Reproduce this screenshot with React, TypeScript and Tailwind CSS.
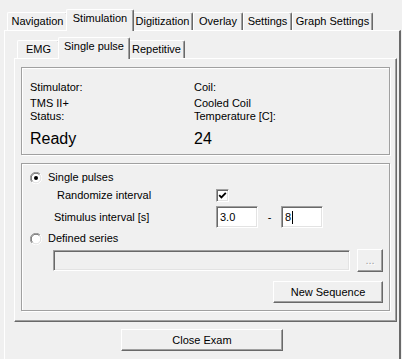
import React from "react";

const raised =
  "border border-t-white border-l-white border-r-[#696969] border-b-[#696969] shadow-[inset_-1px_-1px_0_#a0a0a0]";
const sunken =
  "border border-t-[#a0a0a0] border-l-[#a0a0a0] border-r-white border-b-white shadow-[inset_1px_1px_0_#696969,inset_-1px_-1px_0_#e3e3e3]";
const etched = "border border-[#a0a0a0] shadow-[inset_1px_1px_0_#ffffff,1px_1px_0_#ffffff]";

function Tab({ label, width, active }: { label: string; width: string; active?: boolean }) {
  if (active) {
    return (
      <div
        className={`relative z-10 -mx-[2px] -mb-[1px] h-[22px] ${width} shrink-0 rounded-t-[2px] border-l border-t border-r border-l-white border-t-white border-r-[#696969] bg-[#f0f0f0] pt-[2px] text-center leading-[13px] shadow-[inset_-1px_0_0_#a0a0a0]`}
      >
        {label}
      </div>
    );
  }
  return (
    <div
      className={`h-[18px] ${width} shrink-0 rounded-t-[2px] border-l border-t border-r border-l-white border-t-white border-r-[#696969] pt-[2px] text-center leading-[13px] shadow-[inset_-1px_0_0_#a0a0a0]`}
    >
      {label}
    </div>
  );
}

function Radio({ checked }: { checked?: boolean }) {
  return (
    <svg width="12" height="12" viewBox="0 0 12 12" className="shrink-0">
      <circle cx="6" cy="6" r="4.5" fill="#ffffff" />
      <path d="M1.9 10.1 A5.5 5.5 0 0 1 10.1 1.9" fill="none" stroke="#a0a0a0" strokeWidth="1" />
      <path d="M10.1 1.9 A5.5 5.5 0 0 1 1.9 10.1" fill="none" stroke="#ffffff" strokeWidth="1" />
      <path d="M2.6 9.4 A4.5 4.5 0 0 1 9.4 2.6" fill="none" stroke="#696969" strokeWidth="1" />
      <path d="M9.4 2.6 A4.5 4.5 0 0 1 2.6 9.4" fill="none" stroke="#e3e3e3" strokeWidth="1" />
      {checked && <circle cx="6" cy="6" r="2" fill="#000000" />}
    </svg>
  );
}

function Checkbox() {
  return (
    <span className={`flex h-[13px] w-[13px] shrink-0 items-center justify-center bg-white ${sunken}`}>
      <svg width="9" height="9" viewBox="0 0 9 9">
        <polyline points="1.2,4.2 3.4,6.4 7.8,1.8" fill="none" stroke="#000000" strokeWidth="1.8" />
      </svg>
    </span>
  );
}

export default function App() {
  return (
    <div className="h-[359px] w-[402px] overflow-hidden bg-[#f0f0f0] pt-[9px] font-['Liberation_Sans',Arial,sans-serif] text-[11px] text-black">
      {/* main tabs */}
      <div className="flex h-[21px] items-end pl-[7px]">
        <Tab label="Navigation" width="w-[61px]" />
        <Tab label="Stimulation" width="w-[68px]" active />
        <Tab label="Digitization" width="w-[61px]" />
        <Tab label="Overlay" width="w-[50px]" />
        <Tab label="Settings" width="w-[49px]" />
        <Tab label="Graph Settings" width="w-[81px]" />
      </div>

      <div className="ml-[4px] h-[340px] w-[397px] border-l border-t border-r-2 border-l-white border-t-white border-r-[#696969] pl-[9px] pt-[6px]">
        {/* sub tabs */}
        <div className="flex h-[21px] items-end pl-[3px]">
          <Tab label="EMG" width="w-[43px]" />
          <Tab label="Single pulse" width="w-[72px]" active />
          <Tab label="Repetitive" width="w-[57px]" />
        </div>

        <div className={`h-[264px] w-[383px] px-[6px] pt-[8px] ${raised}`}>
          {/* status box */}
          <div className={`flex h-[88px] pl-[8px] pt-[13px] ${etched}`}>
            <div className="w-[164px] leading-[13px]">
              <div>Stimulator:</div>
              <div className="mt-[3px]">TMS II+</div>
              <div>Status:</div>
              <div className="mt-[6px] text-[16px] leading-[20px]">Ready</div>
            </div>
            <div className="leading-[13px]">
              <div>Coil:</div>
              <div className="mt-[3px]">Cooled Coil</div>
              <div>Temperature [C]:</div>
              <div className="mt-[6px] text-[16px] leading-[20px]">24</div>
            </div>
          </div>

          {/* pulse settings box */}
          <div className={`mt-[8px] flex h-[148px] flex-col pl-[8px] pr-[6px] pt-[7px] leading-[13px] ${etched}`}>
            <div className="flex h-[13px] items-center gap-[6px]">
              <Radio checked />
              <span>Single pulses</span>
            </div>
            <div className="mt-[5px] flex h-[13px] items-center">
              <span className="ml-[27px] w-[159px]">Randomize interval</span>
              <Checkbox />
            </div>
            <div className="mt-[4px] flex h-[22px] items-center">
              <span className="ml-[24px] w-[162px]">Stimulus interval [s]</span>
              <div className={`flex h-[22px] w-[42px] items-center bg-white pl-[3px] ${sunken}`}>3.0</div>
              <span className="w-[23px] text-center">-</span>
              <div className={`flex h-[22px] w-[42px] items-center bg-white pl-[3px] ${sunken}`}>
                8<span className="ml-px h-[13px] w-px bg-black" />
              </div>
            </div>
            <div className="mt-[4px] flex h-[13px] items-center gap-[6px]">
              <Radio />
              <span>Defined series</span>
            </div>
            <div className="mt-[4px] flex h-[23px] items-center gap-[7px]">
              <div className={`ml-[23px] h-[21px] flex-1 bg-[#f0f0f0] ${sunken}`} />
              <div
                className={`flex h-[23px] w-[26px] items-center justify-center text-[#a0a0a0] [text-shadow:1px_1px_0_#ffffff] ${raised}`}
              >
                ...
              </div>
            </div>
            <div className="mt-[9px] flex justify-end">
              <div className={`flex h-[22px] w-[110px] items-center justify-center ${raised}`}>New Sequence</div>
            </div>
          </div>
        </div>

        <div className="mt-[7px] flex justify-center pr-[9px]">
          <div className={`flex h-[22px] w-[162px] items-center justify-center ${raised}`}>Close Exam</div>
        </div>
      </div>
    </div>
  );
}
